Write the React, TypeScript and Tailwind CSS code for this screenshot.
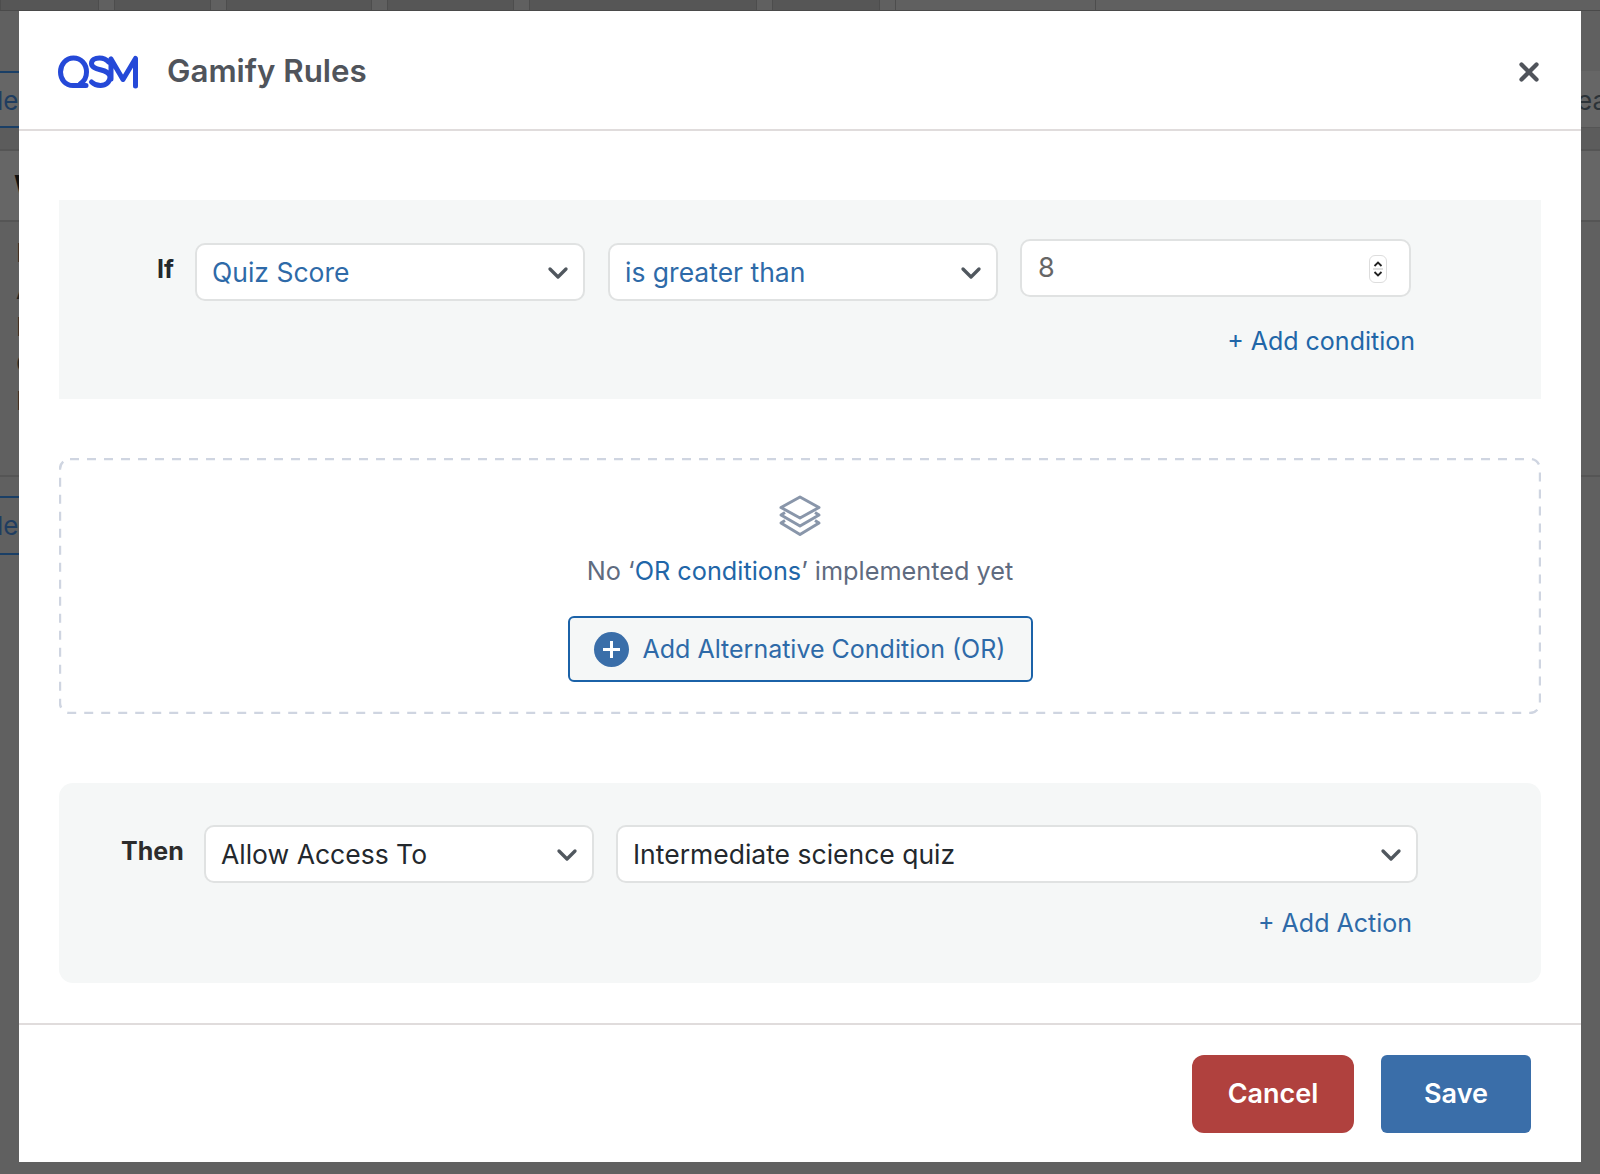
import { ChevronDown, X } from 'lucide-react';

function Select({ value, width, blue }: { value: string; width: string; blue?: boolean }) {
  return (
    <div className={`${width} flex h-[58px] shrink-0 items-center justify-between rounded-[10px] border-2 border-[#e0e2e2] bg-white pl-[15px] pr-[9px] pt-[1px] text-[26.500px] ${blue ? 'text-[#2e6aa8]' : 'text-[#23282d]'}`}>
      <span>{value}</span>
      <ChevronDown size={32} strokeWidth={2.500} className="text-[#50575e]" />
    </div>
  );
}

function QsmLogo() {
  return (
    <svg width="82" height="34" viewBox="0 0 82 34" fill="none" stroke="#2549d8" strokeWidth="5" strokeLinecap="round" strokeLinejoin="round">
      <path d="M28 30.500H15C7.500 30.500 2.500 24.500 2.500 17S8 3 15.500 3 28.500 9 28.500 17c0 5-2 9-6 11.500" />
      <path d="M50.500 7C48 4 45 3 41.500 3c-4.500 0-8 2-8 5.500 0 8 18.500 4.500 18.500 13.500 0 5-4 8.500-9.500 8.500-3.500 0-6.500-1-9-3.500" />
      <path d="M53 4V24M53 4L65 24.500 77.500 3.500V31" />
    </svg>
  );
}

function LayersIcon() {
  return (
    <svg width="44" height="42" viewBox="0 0 44 42" fill="none" stroke="#8996aa" strokeWidth="3" strokeLinejoin="round">
      <path d="M22 2L41 12.500 22 23 3 12.500Z" />
      <path d="M7 17.500L3 20 22 31 41 20 37 17.500" />
      <path d="M7 25.500L3 28 22 39.500 41 28 37 25.500" />
    </svg>
  );
}

// the page that sits dimmed behind the modal, only its edges show
function BackgroundPage() {
  const tabs = [99, 97, 146, 127, 228, 108];
  return (
    <div className="h-[1174px] w-full overflow-hidden bg-[#606060] font-['Inter',sans-serif] text-[#1d2327]">
      <div className="flex h-[11px] items-stretch gap-[15px] border-b border-[#4a4a4a] bg-[#606060]">
        {tabs.map((w, i) => (
          <div key={i} className="border-x border-[#4d4d4d] bg-[#565656]" style={{ width: w }} />
        ))}
        <div className="w-[201px] border-x border-[#4d4d4d]" />
      </div>
      <div className="h-[60px]" />
      <div className="flex h-[57px] items-center justify-between border-b border-[#555555] bg-[#666666] pt-[3px]">
        <div className="mt-[-3px] flex h-[57px] w-[120px] items-center rounded-r border-y-2 border-[#1a3f66] pt-[3px] text-[26px] text-[#1f3d60]">
          <span className="ml-[-3px]">le</span>
        </div>
        <div className="mr-[-7px] text-[26px] text-[#2c3338]">ea</div>
      </div>
      <div className="h-[21px] bg-[#5c5c5c]" />
      <div className="flex h-[73px] items-center border-y-2 border-[#555555] bg-[#666666] pl-[14px] text-[28px] font-bold text-[#111]">W</div>
      <div className="flex flex-col gap-[4px] pl-[16px] pt-[14px] text-[26px] leading-[33px] text-[#222222]">
        <div>I</div>
        <div>A</div>
        <div>I</div>
        <div>C</div>
        <div>I</div>
      </div>
      <div className="mt-[58px] h-[21px] border-t-2 border-[#555555]" />
      <div className="flex h-[59px] w-[120px] items-center rounded-r border-y-2 border-[#1a3f66] text-[26px] text-[#1f3d60]">
        <span className="ml-[-3px]">le</span>
      </div>
    </div>
  );
}

export default function App() {
  return (
    <div className="relative h-[1174px] w-[1600px] overflow-hidden font-['Inter',sans-serif]">
      <BackgroundPage />
      <div className="absolute left-[19px] top-[11px] flex h-[1151px] w-[1562px] flex-col bg-white">
        <header className="flex h-[120px] shrink-0 items-center justify-between border-b-2 border-[#e0dcdc] pl-[39px] pr-[37px] pt-[3px]">
          <div className="flex items-center gap-[27px]">
            <QsmLogo />
            <h1 className="text-[31.300px] font-semibold text-[#50545b]">Gamify Rules</h1>
          </div>
          <X size={30} strokeWidth={3.400} className="text-[#50545b]" />
        </header>

        <div className="flex flex-1 flex-col px-[40px] pt-[69px]">
          <section className="h-[199px] bg-[#f5f7f7]">
            <div className="flex pl-[98px] pt-[39px]">
              <span className="mt-[12px] w-[38px] text-[25px] font-bold text-[#23282d]">If</span>
              <div className="mt-[4px] flex gap-[23px]">
                <Select value="Quiz Score" width="w-[390px]" blue />
                <Select value="is greater than" width="w-[390px]" blue />
              </div>
              <div className="ml-[22px] flex h-[58px] w-[391px] items-center justify-between rounded-[10px] border-2 border-[#e0e2e2] bg-white pl-[16px] pr-[22px] pt-[1px] text-[27px] text-[#666]">
                <span>8</span>
                <div className="flex h-[28px] w-[18px] flex-col items-center justify-center rounded-[6px] border border-[#ddd] text-[#222]">
                  <svg width="10" height="22" viewBox="0 0 10 22" fill="none" stroke="currentColor" strokeWidth="1.800">
                    <path d="M1.500 8L5 4.500 8.500 8" />
                    <path d="M0 11H10" stroke="#ddd" />
                    <path d="M1.500 14L5 17.500 8.500 14" />
                  </svg>
                </div>
              </div>
            </div>
            <div className="mt-[22px] flex justify-end pr-[126px] text-[25px] text-[#2166a8]">+ Add condition</div>
          </section>

          <section className="relative mt-[59px] flex h-[256px] flex-col items-center pt-[37px]">
            <svg className="absolute inset-0 h-full w-full" fill="none">
              <rect x="1" y="1" width="1480" height="254" rx="10" stroke="#cfd5e1" strokeWidth="2.400" strokeDasharray="9 8" />
            </svg>
            <LayersIcon />
            <p className="mt-[16px] text-[25.250px] leading-[36px] text-[#5f6b80]">
              No ‘<span className="text-[#2166a8]">OR conditions</span>’ implemented yet
            </p>
            <button className="mt-[27px] flex h-[66px] w-[465px] items-center gap-[14px] rounded-md border-2 border-[#1b62a8] bg-[#f5f7f7] pl-[24px] text-[25px] text-[#2e6aa8]">
              <span className="flex h-[35px] w-[35px] items-center justify-center rounded-full bg-[#3a6ea9]">
                <svg width="19" height="19" viewBox="0 0 19 19" stroke="#fff" strokeWidth="3">
                  <path d="M9.500 1V18M1 9.500H18" />
                </svg>
              </span>
              <span className="pt-[2px]">Add Alternative Condition (OR)</span>
            </button>
          </section>

          <section className="mt-[69px] h-[200px] rounded-[14px] bg-[#f5f7f7]">
            <div className="flex pl-[62px] pt-[42px]">
              <span className="w-[83px] pt-[8px] text-[25px] font-bold text-[#2c2c2c]">Then</span>
              <div className="flex gap-[22px]">
                <Select value="Allow Access To" width="w-[390px]" />
                <Select value="Intermediate science quiz" width="w-[802px]" />
              </div>
            </div>
            <div className="mt-[22px] flex justify-end pr-[129px] text-[25px] text-[#2e6aa8]">+ Add Action</div>
          </section>
        </div>

        <footer className="flex h-[139px] shrink-0 items-center justify-end gap-[27px] border-t-2 border-[#e0dcdc] pr-[50px] text-[27px] font-semibold text-white">
          <button className="h-[78px] w-[162px] rounded-xl bg-[#b0413e] pt-[2px]">Cancel</button>
          <button className="h-[78px] w-[150px] rounded-md bg-[#3a6ea9] pt-[2px]">Save</button>
        </footer>
      </div>
    </div>
  );
}
